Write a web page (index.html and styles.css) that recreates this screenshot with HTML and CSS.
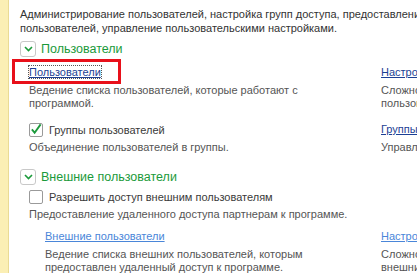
FILE: index.html
```html
<!DOCTYPE html>
<html lang="ru">
<head>
  <meta charset="UTF-8">
  <title>Настройки пользователей и прав</title>
  <link rel="stylesheet" href="styles.css">
</head>
<body>
  <div class="page">
    <div class="strip"></div>
    <div class="content">
      <p class="intro">Администрирование пользователей, настройка групп доступа, предоставление доступа для внешних<br>пользователей, управление пользовательскими настройками.</p>

      <div class="group">
        <div class="group-head">
          <span class="toggle"><svg width="9" height="6" viewBox="0 0 9 6"><path d="M1 1l3.5 3.5L8 1" fill="none" stroke="#1a9a3a" stroke-width="1.6"/></svg></span>
          <span class="group-title">Пользователи</span>
        </div>

        <div class="item first">
          <div class="main">
            <span class="marked"><a href="#" class="link focused">Пользователи</a></span>
            <p class="note">Ведение списка пользователей, которые работают с программой.</p>
          </div>
          <div class="side">
            <a href="#" class="link">Настройки прав пользователей</a>
            <p class="note">Сложность паролей и настройки входа<br>пользователей в программу.</p>
          </div>
        </div>

        <div class="item second">
          <div class="main">
            <label class="check"><span class="box"><svg width="13" height="12" viewBox="0 0 13 12"><path d="M2 6.5l3 3.5L11.5 1" fill="none" stroke="#1c9a3c" stroke-width="2"/></svg></span>Группы пользователей</label>
            <p class="note">Объединение пользователей в группы.</p>
          </div>
          <div class="side">
            <a href="#" class="link">Группы доступа</a>
            <p class="note">Управление группами доступа.</p>
          </div>
        </div>
      </div>

      <div class="group">
        <div class="group-head">
          <span class="toggle"><svg width="9" height="6" viewBox="0 0 9 6"><path d="M1 1l3.5 3.5L8 1" fill="none" stroke="#1a9a3a" stroke-width="1.6"/></svg></span>
          <span class="group-title">Внешние пользователи</span>
        </div>

        <div class="item tight">
          <div class="main">
            <label class="check"><span class="box"></span>Разрешить доступ внешним пользователям</label>
            <p class="note">Предоставление удаленного доступа партнерам к программе.</p>
          </div>
        </div>

        <div class="item sub">
          <div class="main">
            <a href="#" class="link light">Внешние пользователи</a>
            <p class="note">Ведение списка внешних пользователей, которым<br>предоставлен удаленный доступ к программе.</p>
          </div>
          <div class="side">
            <a href="#" class="link light">Настройки входа внешних пользователей</a>
            <p class="note">Сложность паролей и настройки входа<br>внешних пользователей в программу.</p>
          </div>
        </div>
      </div>
    </div>
  </div>
</body>
</html>
```

FILE: styles.css
```css
body {
  margin: 0;
  font-family: "Liberation Sans", Arial, sans-serif;
  font-size: 11px;
  color: #4d4d4d;
  background: #ffffff;
  overflow: hidden;
}
p {
  margin: 0;
}
.page {
  display: flex;
  width: 417px;
  height: 273px;
  overflow: hidden;
}
.strip {
  flex: 0 0 8px;
  background: #fbefb5;
  border-right: 1px solid #eadb95;
}
.content {
  flex: 0 0 auto;
  width: 600px;
  padding: 7px 0 0 11px;
}
.intro {
  color: #333333;
  line-height: 14px;
  white-space: nowrap;
}
.group {
  margin-top: 6px;
}
.group + .group {
  margin-top: 15px;
}
.group-head {
  display: flex;
  align-items: center;
  height: 16px;
}
.toggle {
  width: 14px;
  height: 14px;
  border: 1px solid #c8c8c8;
  border-radius: 3px;
  display: flex;
  align-items: center;
  justify-content: center;
  margin-right: 5px;
}
.group-title {
  font-size: 12.5px;
  color: #1a9a3a;
}
.item {
  display: grid;
  grid-template-columns: 352px 240px;
  padding-left: 9px;
}
.item.first {
  margin-top: 8px;
}
.item.second {
  margin-top: 12px;
}
.item.tight {
  margin-top: 4px;
}
.item.sub {
  padding-left: 25px;
  grid-template-columns: 336px 240px;
  margin-top: 8px;
}
.main, .side {
  white-space: nowrap;
}
.main .note {
  white-space: normal;
  width: 280px;
}
.item.tight .main .note,
.item.sub .main .note {
  white-space: nowrap;
  width: auto;
}
.note {
  line-height: 13px;
  margin-top: 4px;
  color: #555555;
}
.link {
  color: #1c3f94;
  text-decoration: underline;
  line-height: 15px;
}
.link.light {
  color: #4a86d9;
}
.focused {
  outline: 1px dotted #555;
}
.marked {
  position: relative;
  display: inline-block;
}
.marked::after {
  content: "";
  position: absolute;
  left: -17px;
  top: -6px;
  width: 103px;
  height: 19px;
  border: 3px solid #e8101a;
}
.check {
  display: flex;
  align-items: center;
  color: #3a3a3a;
  height: 15px;
}
.box {
  width: 12px;
  height: 12px;
  border: 1px solid #9a9a9a;
  border-radius: 2px;
  margin-right: 6px;
  display: flex;
  align-items: center;
  justify-content: center;
}
.box svg {
  margin-top: -2px;
}
```
